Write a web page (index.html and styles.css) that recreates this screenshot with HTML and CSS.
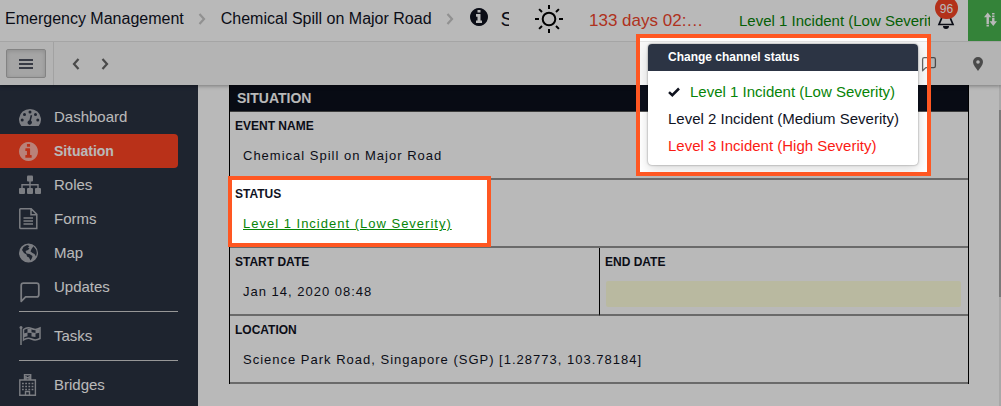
FILE: index.html
```html
<!DOCTYPE html>
<html lang="en">
<head>
<meta charset="utf-8">
<title>Situation</title>
<link rel="stylesheet" href="styles.css">
</head>
<body>
<svg class="sprite" aria-hidden="true">
  <symbol id="info" viewBox="128 128 1536 1536"><path d="M1152 1376v-160q0-14-9-23t-23-9h-96v-512q0-14-9-23t-23-9h-320q-14 0-23 9t-9 23v160q0 14 9 23t23 9h96v320h-96q-14 0-23 9t-9 23v160q0 14 9 23t23 9h448q14 0 23-9t9-23zm-128-896v-160q0-14-9-23t-23-9h-192q-14 0-23 9t-9 23v160q0 14 9 23t23 9h192q14 0 23-9t9-23zm640 416q0 209-103 385.5t-279.5 279.5-385.5 103-385.5-103-279.5-279.5-103-385.5 103-385.5 279.5-279.5 385.5-103 385.5 103 279.5 279.5 103 385.5z"/></symbol>
  <symbol id="chat" viewBox="0 0 20 20"><path d="M2 18.500V4a2 2 0 0 1 2-2h12a2 2 0 0 1 2 2v8.500a2 2 0 0 1-2 2H6z" fill="none" stroke="currentColor" stroke-width="1.600" stroke-linejoin="round"/></symbol>
  <symbol id="next" viewBox="0 0 8 12"><path d="M1.500 1l4.500 5-4.500 5" fill="none" stroke="currentColor" stroke-width="2.200"/></symbol>
</svg>

<header class="topbar">
  <nav class="crumbs" aria-label="Breadcrumb">
    <a href="#">Emergency Management</a>
    <svg class="crumb-sep"><use href="#next"/></svg>
    <a href="#">Chemical Spill on Major Road</a>
    <svg class="crumb-sep"><use href="#next"/></svg>
    <svg class="crumb-icon"><use href="#info"/></svg>
    <h1 class="crumb-title">Situation</h1>
  </nav>
  <svg class="sun" viewBox="0 0 30 30"><circle cx="15" cy="15" r="6.300"/><path d="M15 1v4M15 25v4M1 15h4M25 15h4M5.100 5.100l2.900 2.900M22 22l2.900 2.900M5.100 24.900L8 22M22 8l2.900-2.900"/></svg>
  <span class="timer">133 days 02:…</span>
  <a class="status" href="#">Level 1 Incident (Low Severity)</a>
  <button class="bell" type="button" aria-label="Notifications">
    <svg viewBox="0 0 18 24"><path d="M4.500 8v5.500L2 19.500h14l-2.500-6V8a4.500 4.500 0 0 0-9 0z" fill="none" stroke="currentColor" stroke-width="1.700"/><path d="M6 21h6a3 3 0 0 1-6 0z"/></svg>
    <span class="badge">96</span>
  </button>
  <button class="sync" type="button" aria-label="Switch">
    <svg viewBox="0 0 14 16"><path d="M4 13V5M4 15.500v-1.500M10 11V6.500M10 5.500V3.700M10 2.700V1" stroke="currentColor" stroke-width="2.600"/><path d="M0 5.500L4 .5l4 5zM6 10l4 5 4-5z"/></svg>
  </button>

  <section class="menu">
    <h2>Change channel status</h2>
    <ul>
      <li><button type="button" class="low"><svg viewBox="0 0 12 10"><path d="M1 5.200l3.300 3L11 1.500" fill="none" stroke="#10131f" stroke-width="2.500"/></svg>Level 1 Incident (Low Severity)</button></li>
      <li><button type="button">Level 2 Incident (Medium Severity)</button></li>
      <li><button type="button" class="high">Level 3 Incident (High Severity)</button></li>
    </ul>
  </section>
</header>

<div class="toolbar">
  <div class="toggle-wrap">
    <button class="toggle" type="button" aria-label="Toggle menu"><svg viewBox="0 0 14 10"><path d="M0 1h14M0 5h14M0 9h14" stroke="currentColor" stroke-width="1.600"/></svg></button>
  </div>
  <button class="tool back" type="button" aria-label="Back"><svg><use href="#next"/></svg></button>
  <button class="tool forward" type="button" aria-label="Forward"><svg><use href="#next"/></svg></button>
  <span class="spacer"></span>
  <button class="tool talk" type="button" aria-label="Chat"><svg><use href="#chat"/></svg></button>
  <button class="tool pin" type="button" aria-label="Location"><svg viewBox="0 0 10 14"><path fill-rule="evenodd" d="M5 0a5 5 0 0 1 5 5c0 3-3 6-5 9-2-3-5-6-5-9a5 5 0 0 1 5-5zm0 3.200a1.800 1.800 0 1 0 0 3.600 1.800 1.800 0 0 0 0-3.600z"/></svg></button>
</div>

<div class="body">
  <nav class="sidebar" aria-label="Channel">
    <a href="#"><svg viewBox="0 0 22 22"><path fill-rule="evenodd" d="M2 19.500A11 10.500 0 1 1 20 19.500q-.3.500-1 .5H3q-.7 0-1-.500zM11 4.600a1.500 1.500 0 1 0 0 3 1.500 1.500 0 0 0 0-3zM5.500 7a1.500 1.500 0 1 0 0 3 1.500 1.500 0 0 0 0-3zm11 0a1.500 1.500 0 1 0 0 3 1.500 1.500 0 0 0 0-3zM3.200 12.500a1.500 1.500 0 1 0 0 3 1.500 1.500 0 0 0 0-3zm15.600 0a1.500 1.500 0 1 0 0 3 1.500 1.500 0 0 0 0-3zM11.700 9l-1.300 5.300a2.200 2.200 0 1 0 1.500.3l1.300-5.200z"/></svg>Dashboard</a>
    <a href="#" class="active" aria-current="page"><svg class="narrow"><use href="#info"/></svg>Situation</a>
    <a href="#"><svg viewBox="0 0 22 22"><rect x="8" y="1.500" width="6" height="6" rx="1"/><rect x="0" y="14" width="6" height="6" rx="1"/><rect x="8" y="14" width="6" height="6" rx="1"/><rect x="16" y="14" width="6" height="6" rx="1"/><path d="M11 7v7M3 14v-3.300h16V14" fill="none" stroke="currentColor" stroke-width="1.400"/></svg>Roles</a>
    <a href="#"><svg viewBox="0 0 22 22"><path d="M1.500.8h10.700l5.600 5.600v14H1.500q-.7 0-.7-.7V1.500q0-.7.7-.7zM12 .8v6h6M4.500 10h9.500M4.500 13h9.500M4.500 16h9.500" fill="none" stroke="currentColor" stroke-width="1.500"/></svg>Forms</a>
    <a href="#"><svg viewBox="0 0 22 22"><path fill-rule="evenodd" d="M9.500 1.500a9.500 9.500 0 1 1 0 19 9.500 9.500 0 0 1 0-19zM8 3L4.500 5 3 8l2 3 2.500 1.500.5 2 2 1 1.500 3L13 16l.5-2-3-2-3-.500L6.500 9 9 8l1.500-1.500L9 5.500l1.500-1.500zm6.500 1.200L12.500 7l-1 2.500 2 1.500 2 1 1.500 2.500L17.800 11l-.5-3z"/></svg>Map</a>
    <a href="#"><svg class="low-icon"><use href="#chat"/></svg>Updates</a>
    <hr>
    <a href="#"><svg viewBox="0 0 22 22"><path d="M2 3v17" stroke="currentColor" stroke-width="1.500"/><circle cx="2" cy="2.500" r="1.500"/><path d="M4.500 4.500q4-3 8-1t8.500-.5v10.500q-4.500 2.500-8.500.5t-8 1z" fill="none" stroke="currentColor" stroke-width="1.500"/><path d="M8.500 3.500l4 .5v3.300l4 .7V4.500l4-.5v3.700l-4 .8v3.500l-4-.5V8l-4-.3v3.500l-4 1V8.500l4-1z"/></svg>Tasks</a>
    <hr>
    <a href="#"><svg viewBox="0 0 22 22"><path d="M.8 6h15.600v15.200H.8z M5.500 6V.8h6.200V6M7 2v3.500M10.200 2v3.500M7 3.800h3.200M6.500 21v-3.500h4V21" fill="none" stroke="currentColor" stroke-width="1.400"/><path d="M3 9.500h11.500M3 12.500h11.500M3 15.500h11.500" stroke="currentColor" stroke-width="1.500" stroke-dasharray="1.800 1.400"/></svg>Bridges</a>
  </nav>

  <main class="content">
    <table class="sheet">
      <thead><tr><th colspan="2">SITUATION</th></tr></thead>
      <tbody>
        <tr><td colspan="2"><h3>EVENT NAME</h3><p>Chemical Spill on Major Road</p></td></tr>
        <tr><td colspan="2"><h3>STATUS</h3><p><a class="low" href="#">Level 1 Incident (Low Severity)</a></p></td></tr>
        <tr>
          <td><h3>START DATE</h3><p>Jan 14, 2020 08:48</p></td>
          <td><h3><label for="end">END DATE</label></h3><input id="end" type="text"></td>
        </tr>
        <tr><td colspan="2"><h3>LOCATION</h3><p>Science Park Road, Singapore (SGP) [1.28773, 103.78184]</p></td></tr>
      </tbody>
    </table>
  </main>
  <div class="scroll"><div class="thumb"></div></div>
</div>

<div class="dim"></div>
<div class="frame frame-menu"></div>
<div class="frame frame-status"></div>
</body>
</html>
```
FILE: styles.css
```css
* { box-sizing: border-box; }
body {
  margin: 0;
  min-height: 100vh;
  display: flex;
  flex-direction: column;
  position: relative;
  overflow: hidden;
  background: #fff;
  color: #10131f;
  font-family: "Liberation Sans", Arial, sans-serif;
}
h1, h2, h3, p, ul { margin: 0; padding: 0; font-weight: normal; }
ul { list-style: none; }
a { color: inherit; text-decoration: none; }
button { font: inherit; color: inherit; background: none; border: 0; padding: 0; }
svg { fill: currentColor; flex: none; display: block; }
.sprite { position: absolute; width: 0; height: 0; }
.low { color: #078407; }
.high { color: #fb1b14; }

.topbar {
  position: relative;
  z-index: 3;
  display: flex;
  height: 42px;
  border-bottom: 1px solid #e4e4e4;
  background: #fff;
}
.crumbs {
  flex: 1;
  min-width: 0;
  display: flex;
  align-items: center;
  padding: 0 0 4px 5px;
  font-size: 16px;
  line-height: 24px;
  white-space: nowrap;
  overflow: hidden;
}
.crumb-sep { width: 8px; height: 12px; margin: 0 15px 0 14px; color: #c8c8c8; }
.crumb-icon { width: 18px; height: 18px; margin: 0 13px 4px 1px; }
.crumb-title { font-size: 20px; line-height: 24px; min-width: 0; overflow: hidden; }
.sun { width: 30px; height: 30px; margin: 4px 25px 0 25px; fill: none; stroke: #000; stroke-width: 2; }
.timer { width: 150px; padding-top: 9px; font-size: 17px; line-height: 24px; color: #f1452b; }
.status { width: 191px; padding-top: 9px; font-size: 15px; line-height: 24px; color: #078407; white-space: nowrap; overflow: hidden; }
.bell { position: relative; width: 38px; padding: 5px 0 0 7px; align-self: flex-start; }
.bell svg { width: 18px; height: 24px; }
.badge {
  position: absolute;
  top: -3px;
  left: 5px;
  width: 23px;
  height: 22px;
  border-radius: 11px;
  background: #f74425;
  color: #fff;
  font-size: 12px;
  line-height: 24px;
  text-align: center;
}
.sync { width: 33px; padding: 0 0 2px 16px; background: #48b54f; color: #fff; overflow: hidden; }
.sync svg { width: 13px; height: 15px; }

.menu {
  position: absolute;
  top: 44px;
  right: 83px;
  width: 270px;
  border-radius: 4px;
  background: #fff;
  overflow: hidden;
  box-shadow: 0 0 2px rgba(0, 0, 0, .5), 0 4px 12px rgba(0, 0, 0, .15);
}
.menu h2 { padding: 0 20px; background: #2c3444; color: #fff; font-size: 12px; font-weight: bold; line-height: 27px; }
.menu ul { padding: 7px 20px 6px; font-size: 15px; line-height: 27px; }
.menu button { display: flex; align-items: center; white-space: nowrap; }
.menu svg { width: 12px; height: 10px; margin-right: 10px; }

.toolbar {
  position: relative;
  z-index: 2;
  display: flex;
  align-items: center;
  height: 43px;
  background: #f8f8f8;
  color: #666;
  box-shadow: 0 1px 4px rgba(0, 0, 0, .35);
}
.toggle-wrap { align-self: stretch; padding: 7px 7px 0 6px; border-right: 1px solid #e0e0e0; }
.toggle {
  display: grid;
  place-items: center;
  width: 40px;
  height: 29px;
  border: 1px solid #b5b5b5;
  border-radius: 2px;
  background: #e4e4e4;
  box-shadow: inset 0 1px 4px rgba(0, 0, 0, .15);
  color: #1c2234;
}
.toggle svg { width: 14px; height: 10px; }
.tool svg { width: 8px; height: 12px; }
.back { margin-left: 18px; transform: rotate(180deg); }
.forward { margin-left: 21px; }
.spacer { flex: 1; }
.tool.talk svg { width: 16px; height: 16px; }
.pin { margin: 0 18px 0 36px; }
.tool.pin svg { width: 10px; height: 14px; }

.body { flex: 1; display: flex; }
.sidebar { width: 198px; padding: 15px 20px 4px 0; background: #2a3242; color: #fff; font-size: 15px; line-height: 34px; }
.sidebar a { display: flex; align-items: center; gap: 13px; padding-left: 19px; }
.sidebar svg { width: 22px; height: 22px; opacity: .6; }
.sidebar svg.narrow { width: 19px; height: 19px; margin-right: 3px; }
.sidebar svg.low-icon { margin-top: 9px; }
.sidebar .active { border-radius: 0 4px 4px 0; background: #ff4423; font-size: 14px; font-weight: bold; }
.sidebar hr { margin: 7px 0 7px 19px; border: 0; border-top: 1px solid #d0d0d0; }

.content { flex: 1; min-width: 0; padding: 0 30px 22px 31px; }
.sheet { width: 100%; table-layout: fixed; border-collapse: separate; border-spacing: 0; border-left: 1px solid #000; border-right: 1px solid #000; }
.sheet th { height: 27px; padding: 0 7px; border-bottom: 1px solid #555; background: #0c101c; color: #fff; font-size: 14px; text-align: left; }
.sheet td { height: 68px; padding: 6px 5px 0; border-bottom: 2px solid #939393; vertical-align: top; }
.sheet td + td { border-left: 1px solid #000; }
.sheet h3 { font-size: 12px; font-weight: bold; line-height: 16px; }
.sheet p { padding: 12px 8px 0; font-size: 13px; line-height: 20px; letter-spacing: 1px; }
.sheet p a { text-decoration: underline; }
.sheet input { display: block; width: calc(100% - 3px); height: 26px; margin: 11px 0 0 1px; border: 0; border-radius: 2px; background: #ffffdd; }
.scroll { width: 2px; padding-top: 25px; background: #e8e8e8; }
.thumb { height: 187px; background: #a8a8a8; }

/* Dimming layer with two windows cut out: the menu and the status field. */
.dim {
  position: absolute;
  inset: 0;
  z-index: 4;
  background: rgba(0, 0, 0, .275);
  pointer-events: none;
  clip-path: polygon(evenodd,
    0 0, 100% 0, 100% 100%, 0 100%, 0 0,
    232px 180px, 487px 180px, 487px 243px, 232px 243px, 232px 180px, 0 0,
    calc(100% - 361px) 38px, calc(100% - 74px) 38px, calc(100% - 74px) 172px, calc(100% - 361px) 172px, calc(100% - 361px) 38px, 0 0);
}
.frame { position: absolute; z-index: 5; border: 4px solid #ff5722; pointer-events: none; }
.frame-menu { top: 34px; right: 70px; width: 295px; height: 142px; }
.frame-status { top: 176px; left: 228px; width: 263px; height: 71px; }
```
